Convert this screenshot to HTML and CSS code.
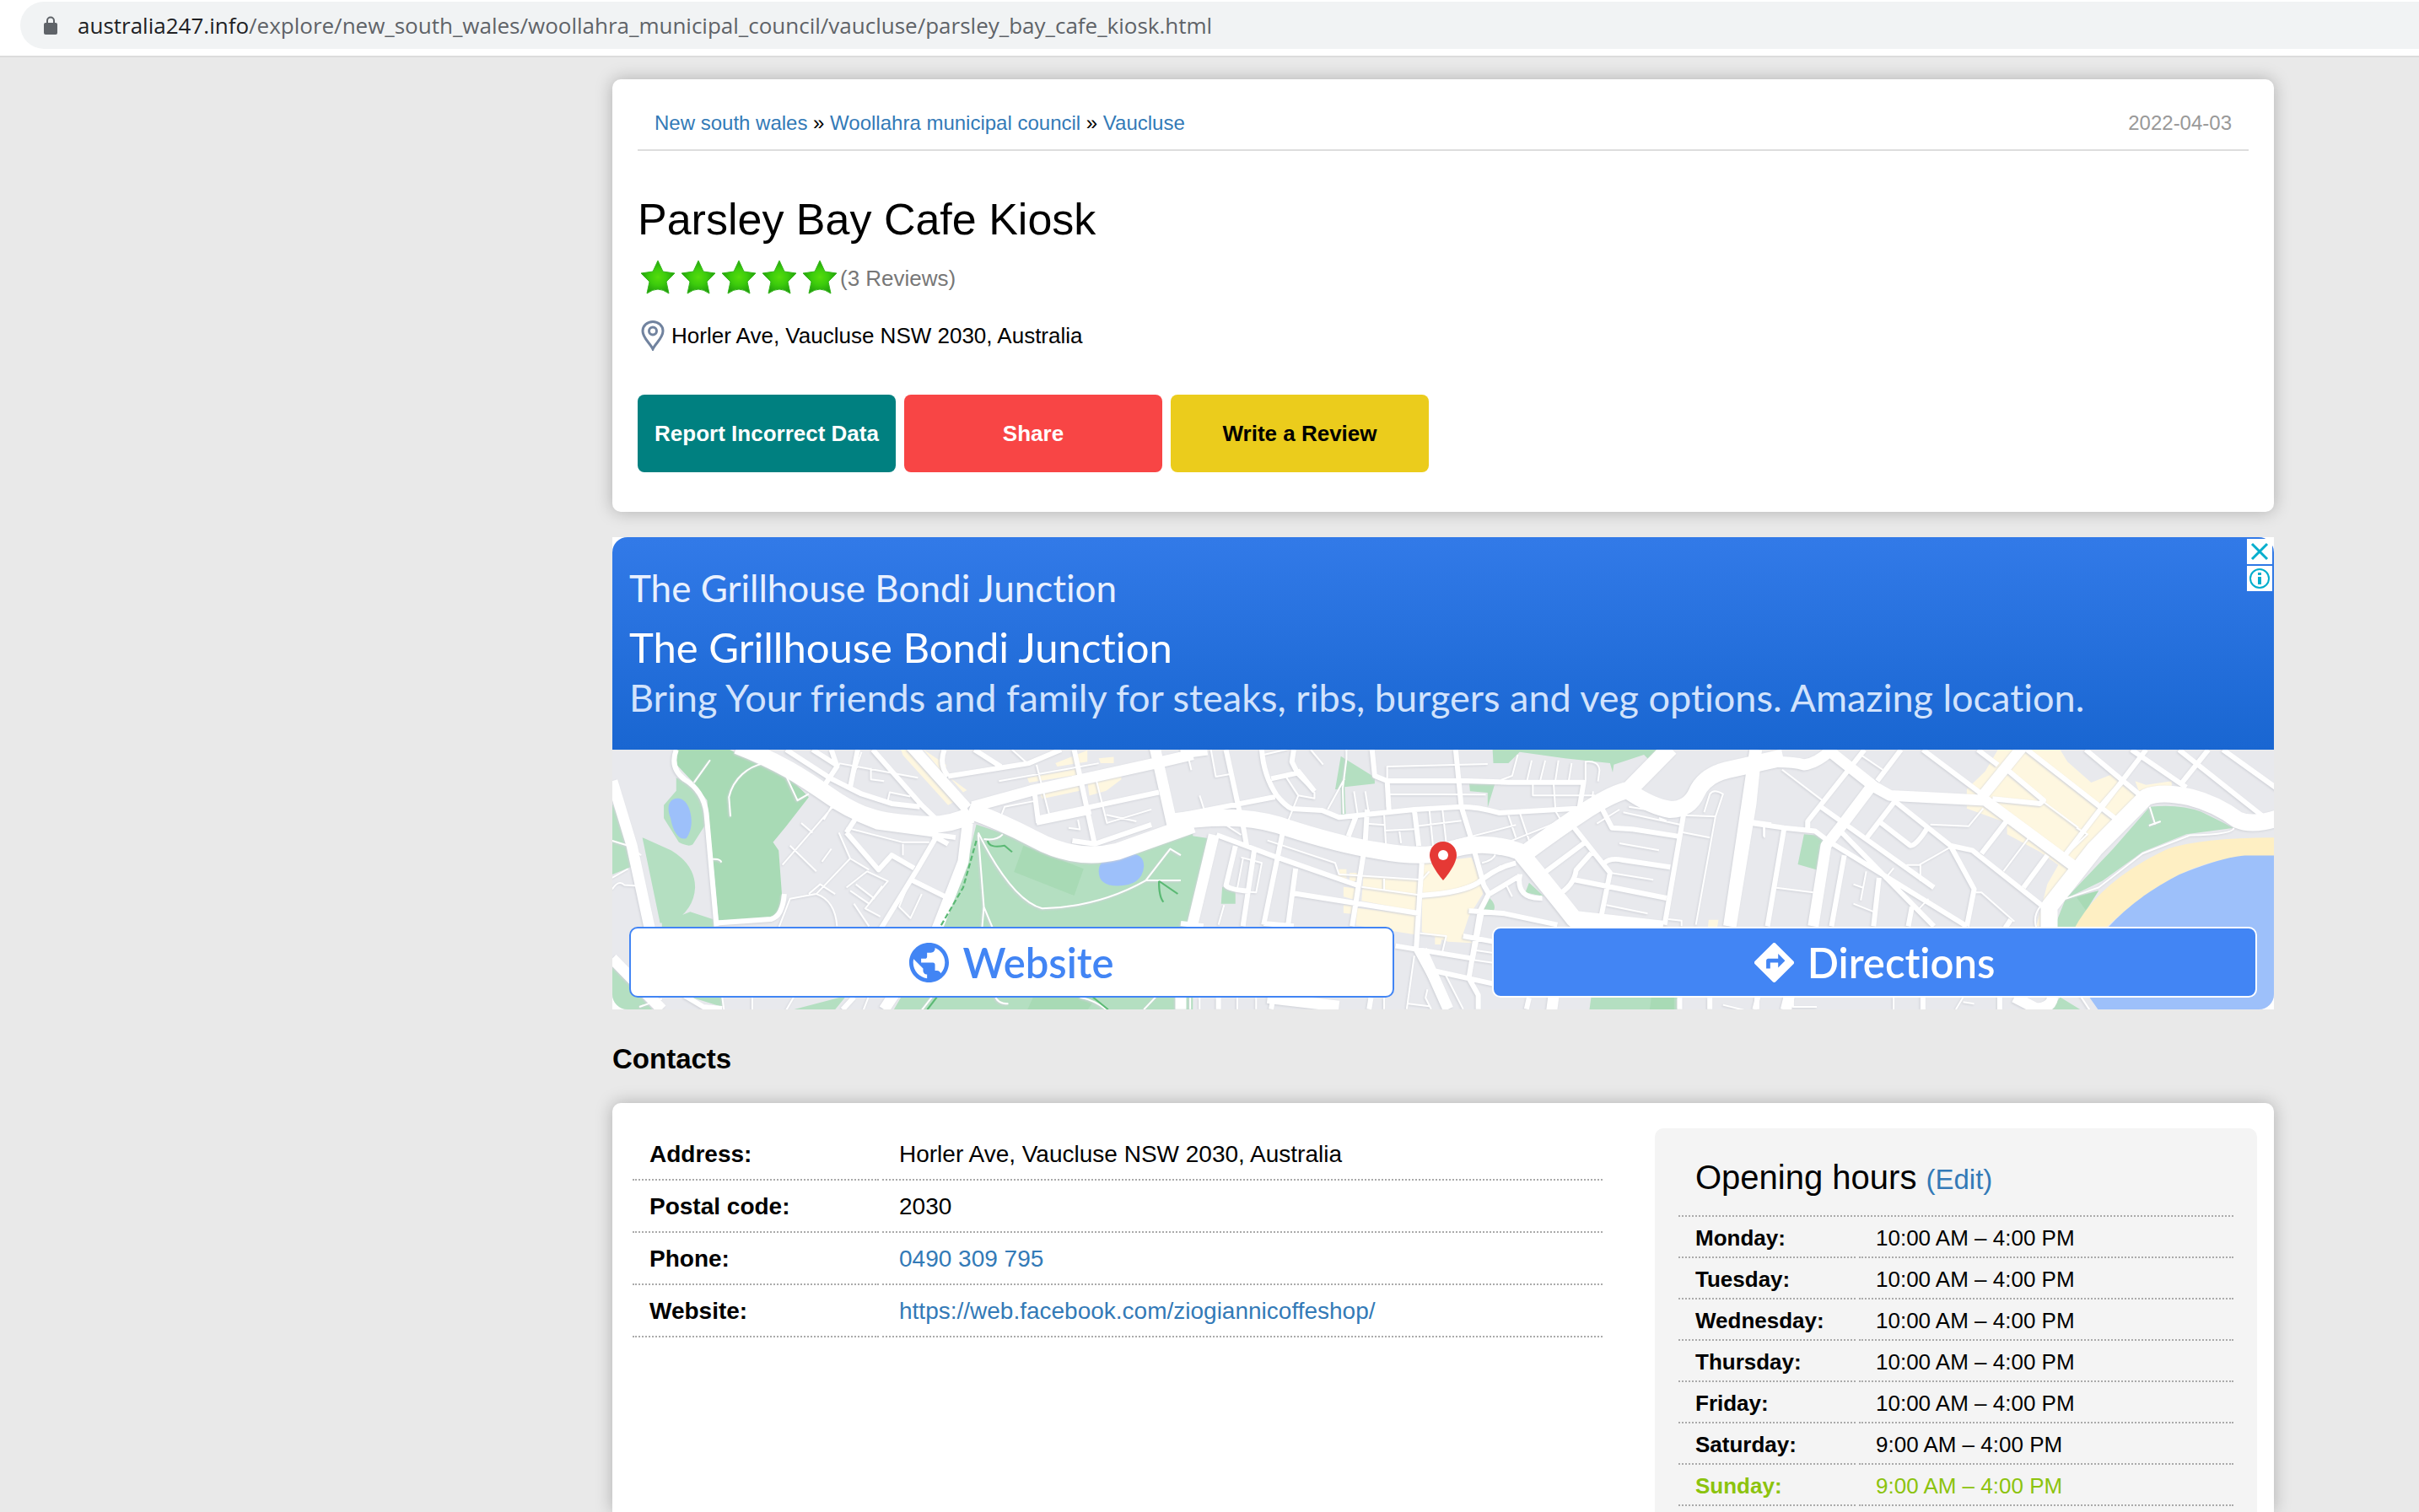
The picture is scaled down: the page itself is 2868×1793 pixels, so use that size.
FILE: index.html
```html
<!DOCTYPE html>
<html lang="en">
<head>
<meta charset="utf-8">
<title>Parsley Bay Cafe Kiosk</title>
<link rel="stylesheet" href="styles.css">
</head>
<body>
<header class="browser-bar">
  <div class="omnibox">
    <svg class="lock" viewBox="0 0 16 22" aria-hidden="true"><path d="M4 9V5.500a4 4 0 0 1 8 0V9" fill="none" stroke="#5f6368" stroke-width="2"/><rect y="8" width="16" height="14" rx="2" fill="#5f6368"/></svg>
    <span class="url"><span class="url-host">australia247.info</span>/explore/new_south_wales/woollahra_municipal_council/vaucluse/parsley_bay_cafe_kiosk.html</span>
  </div>
</header>
<main class="page">
  <section class="card intro">
    <div class="crumb-row">
      <nav class="crumbs"><a href="#">New south wales</a> » <a href="#">Woollahra municipal council</a> » <a href="#">Vaucluse</a></nav>
      <time class="date">2022-04-03</time>
    </div>
    <h1>Parsley Bay Cafe Kiosk</h1>
    <div class="rating">
      <svg class="stars" viewBox="0 0 240 44" role="img" aria-label="5 stars">
        <defs>
          <radialGradient id="starFill"><stop offset="0" stop-color="#55dc0c"/><stop offset=".5" stop-color="#3ccb0c"/><stop offset="1" stop-color="#22a00c"/></radialGradient>
          <path id="star" d="M24 2L30 15L44 17L34 27L37 41Q30 36 24 36Q18 36 11 41L14 27L4 17L18 15Z" fill="url(#starFill)" stroke="#35b51c" stroke-width="1" stroke-linejoin="round"/>
        </defs>
        <use href="#star"/><use href="#star" x="48"/><use href="#star" x="96"/><use href="#star" x="144"/><use href="#star" x="192"/>
      </svg>
      <span class="reviews">(3 Reviews)</span>
    </div>
    <div class="place">
      <svg class="place-pin" viewBox="0 0 28 36" aria-hidden="true"><g fill="none" stroke="#71839f" stroke-width="3"><path d="M14 34C11 27 2 21 2 12.500A12 11 0 0 1 26 12.500C26 21 17 27 14 34Z"/><circle cx="14" cy="12.500" r="4.500"/></g></svg>
      <span>Horler Ave, Vaucluse NSW 2030, Australia</span>
    </div>
    <div class="actions">
      <button class="action report" type="button">Report Incorrect Data</button>
      <button class="action share" type="button">Share</button>
      <button class="action review" type="button">Write a Review</button>
    </div>
  </section>

  <aside class="ad">
    <div class="ad-inner">
      <div class="ad-copy">
        <p class="ad-brand">The Grillhouse Bondi Junction</p>
        <p class="ad-title">The Grillhouse Bondi Junction</p>
        <p class="ad-text">Bring Your friends and family for steaks, ribs, burgers and veg options. Amazing location.</p>
      </div>
      <div class="ad-map">
        <svg class="map" viewBox="0 0 1970 308" preserveAspectRatio="xMidYMid slice" aria-hidden="true">
          <rect width="1970" height="308" fill="#e8e9ed"/>
          <!-- parks, water and shopping streets -->
          <g transform="matrix(.4464 0 0 .3827 -26 -269)">
            <path class="park-deep" d="M230 703H370L440 745L520 780L580 850L520 940L485 990L500 1015L510 1175Q505 1222 480 1224L340 1232L310 860L270 800L225 745Z"/>
            <path class="park" d="M228 790L270 812L305 860L308 930L272 996Q262 1006 235 990L195 915V875L228 830ZM138 975L215 1015Q278 1060 278 1130Q275 1200 215 1240H185ZM58 870L95 970L120 1060L58 1090ZM190 1240L265 1205L330 1230V1255H190ZM58 1370L165 1508H58ZM240 1460L350 1500V1460ZM540 1508L680 1465L650 1508ZM830 1460H1600V1510H805ZM1025 935L1130 975L1270 1045L1400 1040L1600 950V1255H930L990 1100Z"/>
            <path class="park-deep" d="M1150 1000L1310 1072L1285 1155L1125 1082ZM1180 1460H1350L1320 1510H1160Z"/>
            <path class="water" d="M235 854C210 850 200 880 213 915C220 965 240 985 255 977C280 940 268 860 235 854ZM1400 1030Q1470 1010 1470 1065Q1465 1125 1400 1125Q1350 1125 1350 1080Q1350 1040 1400 1030Z"/>
            <path class="shops" d="M825 703H850L965 865L950 875L830 720ZM885 703L945 750L940 780ZM1160 790L1300 760V780L1165 805ZM1190 830L1300 808V830L1200 855ZM1235 745L1320 705V740L1240 755ZM1320 800L1410 785V795L1370 830L1325 845ZM1350 730L1390 725V745H1355ZM955 790L1000 828L990 835Z"/>
          </g>
          <g transform="matrix(.4464 0 0 .3333 674 -29)">
            <path class="park" d="M0 388L72 402L20 720H0ZM425 110L515 185V208L435 220L438 318H426L425 228H410ZM828 87H1285L1245 125L1230 105L1150 140L1147 168L1140 135L1020 118L900 95L870 135H830ZM766 205H835L815 292V240L768 235ZM110 575H145V635H107ZM925 560L965 610L915 595ZM820 615Q840 640 830 662L803 660ZM1090 965H1320V1015H1085Z"/>
            <path class="park-deep" d="M1250 965H1310V1015H1245Z"/>
            <path class="shops" d="M642 492L772 470L797 545L802 600L765 680L750 740L775 775L710 770L640 735ZM485 535L638 550V665L480 625ZM468 650L636 675L622 745L465 712ZM420 512H440V545L415 540ZM448 525H470V555H448ZM432 575L465 580L460 620L432 610ZM432 640H458V672L432 668ZM675 750H695L690 780H675ZM1402 692H1428L1425 718H1400Z"/>
          </g>
          <g transform="matrix(.4337 0 0 .3827 1324 -269)">
            <path class="shops" d="M735 703H905L925 740L990 805L1045 780L1150 850L935 1060L880 1250H840L870 1120L900 1060L850 1020L760 965V930L650 885V825L700 770ZM1110 800L1140 812L1210 800V815L1120 830Z"/>
            <path class="park" d="M1150 880Q1230 870 1290 895L1380 945L1250 965L1130 1020L1020 1110L920 1165L1050 1010ZM205 965L258 970L240 1075L188 1058ZM890 1250L920 1165L1010 1140L945 1260ZM880 1508L905 1470L960 1508Z"/>
            <path class="park-deep" d="M950 1160L1010 1140L975 1200Z"/>
            <path class="sand" d="M1500 975Q1290 975 1200 1010Q1010 1110 940 1265H1020Q1230 1040 1400 1040L1500 1032Z"/>
            <path class="water" d="M1500 1031H1410Q1350 1035 1230 1090Q1110 1160 1035 1255V1465L985 1470L1010 1510H1500Z"/>
          </g>
          <!-- roads -->
          <g class="roads">
            <g transform="matrix(.4464 0 0 .3827 -26 -269)">
              <path class="lane" d="M58 985L100 1000L135 1030M58 1100L100 1072M58 1135Q75 1105 90 1122L125 1125M318 735L275 805M372 910L368 850C380 790 420 755 460 745M520 785L550 860L580 840M325 1042Q345 1040 348 1052M720 710L690 815M660 745L870 790M790 860L795 835L850 848M745 760V795L780 800M1085 800L1350 745M1120 703L1160 745M1185 750L1220 910M1090 910L1100 880L1180 862M1340 780L1372 930L1490 888M1370 905L1450 925M1270 945L1300 950L1295 920M620 920L640 880L700 908M560 930L590 960M510 1060L640 885M530 1000L600 1080M680 945L830 990H900M690 1040L660 960M830 995V1030M600 1150L690 1040L740 1075M640 1010L615 1050M680 1130L735 1080L790 1110L730 1195L770 1220M690 1140L740 1180L775 1125M705 1120L755 1165M850 1105L820 1190L850 1225L880 1150M500 1255L530 1165L600 1150Q650 1170 655 1250M580 1150L610 1120L650 1150M700 1180L740 1250M1030 965L1045 1190L1070 1260M1045 1190L1040 1260M1030 960Q1120 1170 1200 1195Q1350 1190 1475 1108L1540 1010L1568 1030M1475 1108H1568M1045 980Q1080 985 1095 965M130 1500L190 1475M350 1470L355 1510M430 1470V1510M540 1470L520 1510M740 1465L725 1510M910 1465L880 1510M1075 1465Q1080 1490 1110 1490M1300 1470Q1340 1480 1370 1508M1505 1465L1470 1508"/>
              <path class="street" d="M228 703Q210 760 250 795Q300 830 308 900L335 1250M335 1240L480 1228Q510 1220 515 1150M520 703L635 790L720 840L800 870L875 880M640 703L655 755L615 825M590 703L660 755M710 703L690 820M750 703L880 875L920 920M950 785L1165 745L1250 703M940 703Q925 750 950 785M1020 703L1090 755M1285 703L1340 1000M1180 840L1190 930M1190 915L1510 835M1185 930L1330 895M680 960L705 915L760 942L970 975M680 960L765 1075L800 1030L860 1070M925 960L870 1070L770 1260M850 1105L945 1160M910 970L950 995M1280 985L1340 995L1490 935M250 1465L300 1500L350 1505M670 1508L700 1470"/>
              <path class="avenue" d="M58 800L110 1000L158 1260M58 1350L190 1508M850 690L1000 885M1015 880L1170 830L1500 745L1600 718M1498 690L1545 935M1002 930L990 1050L960 1140L920 1260L780 1508"/>
              <path class="highway" d="M390 690C500 740 560 785 640 850S780 930 900 935Q960 935 1010 905M1005 890Q1090 925 1180 980Q1290 1050 1400 1018L1600 935"/>
            </g>
            <g transform="matrix(.4464 0 0 .3333 674 -29)">
              <path class="lane" d="M15 87L28 160M80 87L93 183L128 175M50 250L62 300M345 87L378 140M220 105L285 85M280 185L312 250L285 340M300 165L355 240V260L312 250M440 87V120L430 225L432 315M435 190L390 300M460 235L470 320M490 235L500 320M548 290V147L815 138M550 245L810 247M730 87L745 290M895 105L880 180L850 195M932 125L920 195M968 125L955 195M1003 125L995 195M1038 135L1030 200M1075 200V130Q1110 125 1112 160L1108 200M935 195V250H1100M990 205L995 300M1095 235L1090 300M495 350L540 355M540 320L545 430M540 375L620 370M580 370L585 420M660 300L670 430M695 300L705 420M620 360L745 340M730 410L890 355M900 310L930 430M870 415L1010 340M995 305L1015 350M870 320L890 400M1165 300L1105 350M1175 310L1330 355M1190 290L1335 320L1420 325L1440 245Q1415 225 1405 245L1390 310M1330 380L1405 400M1420 325L1368 710M1165 420L1270 445M1140 525L1255 550M1130 640L1240 670M1270 330L1290 340M1295 690L1330 695V715M1568 360H1550V400M230 410L410 490L420 530L640 550M120 355L160 390M160 470L215 490L200 595L155 590M165 475L150 580M115 640L100 710M480 575L640 605Q780 590 850 500M540 540V590M640 550L660 520M800 490Q830 480 835 460M865 570L880 610M905 530L900 570M635 740L705 750L695 805M780 800L830 810M775 835L830 845M620 820L600 1010M655 940L650 970L665 1010M700 880L750 1010M600 990L660 1000M25 970V1010M50 970V1010M150 970V1010M200 970V1010M540 970V1010M1440 995L1500 1015"/>
              <path class="street" d="M120 87L158 320M215 87Q220 180 255 250Q280 290 295 297L375 303L420 328L490 318L620 300L745 290Q790 290 845 312L1070 295M240 190L310 170L295 130L300 87M310 160L355 235M0 320L250 255M508 87L515 180L548 198L740 197L870 203H1070L1058 300M548 198L553 310M730 87L745 290L775 420M620 300L632 430M465 325L445 395M495 300L490 410M165 355L175 430M95 390L245 465L470 570M145 430L120 570Q130 585 180 590M195 445L165 715M270 385L220 710M305 510L285 710M485 460L455 715M295 597L635 670M640 490L625 800L710 1010M570 785L775 830L800 660M640 605Q750 595 790 560Q840 505 890 490M780 450L805 570L818 600L795 660L765 900L790 960V1010M820 600L895 540M900 530Q890 620 960 615M765 660L860 670L1000 710M1120 300L1145 365L1200 370L1320 395M1335 320L1285 710M1045 365L1140 525L1115 690M950 540L1075 415M1000 605Q1045 570 1050 515L1090 455M1045 550L1290 615M1125 490Q1140 470 1175 480L1300 505M660 870L830 920M750 750L830 770M0 705L60 715M220 705L300 715M100 970V1010M245 970L240 1010M505 970L500 1010M925 970L918 1010M1325 970V1010M1405 970V1010M1530 970V1010M1515 345L1568 355"/>
              <path class="avenue" d="M0 100L70 87M88 390L30 715M640 800L710 1010M1525 87L1455 715M990 965L985 1015M0 965V1010M230 970L420 1000"/>
              <path class="highway" d="M-20 343Q150 310 260 355Q420 425 520 445Q640 475 700 450Q800 400 900 450Q980 580 1045 690L1280 725M900 470Q1000 370 1080 300Q1150 240 1190 230L1300 80M1190 235Q1250 290 1300 300Q1350 300 1370 240Q1390 180 1450 160L1600 115"/>
            </g>
            <g transform="matrix(.4337 0 0 .3827 1324 -269)">
              <path class="lane" d="M355 715L420 765M145 765L255 860M95 940V972M125 1130L230 1145M340 1120L365 1130M375 1080L360 1170M340 1180L395 1205M425 1105L450 1070M550 935L655 940L695 885M485 1060H520L605 1005M523 1060V1110M520 1195L545 1165M675 1145H690L780 1235M820 975L750 1080M860 865L955 945M965 955L920 1030L980 965L950 945M1150 880L1165 935M1148 938L1180 925M1380 945Q1380 965 1260 968L1130 1025L1010 1130L920 1165M850 1190Q830 1220 840 1255M175 1470V1500H240M450 1470V1508M640 1470L620 1508M640 1485L670 1490M960 1465L985 1508"/>
              <path class="street" d="M470 703L405 800M370 703L215 925V955M60 930L150 945L235 955L270 985L650 1250M150 950L105 1250M245 875L560 1130M300 950L560 1250M315 1030L280 1250M455 860L370 985M450 860L605 1000L665 1015L860 1190M410 925L495 1000Q510 1005 545 940M605 1000L670 1135L650 1250M765 915L690 1025M870 1030L805 1130M410 1100L395 1250M500 1190L490 1250M770 1230L755 1255M530 703L685 835M680 703L735 750M755 760L860 860L850 870L720 855M815 703L1060 920M1140 703L915 1035M975 703L1125 845M1080 795L1015 880M1100 703L1250 820M1230 703L1460 910M1310 703L1235 810M1350 703L1500 825M80 1465L70 1508M530 1465V1508M740 1465V1508"/>
              <path class="avenue" d="M75 703L60 870L5 1250M0 770L60 745Q160 735 205 750Q240 745 280 703M270 703L400 820M400 800L300 950L265 1000L230 1250M400 820L440 845L700 860M805 690L690 850M700 860L950 1070M165 1465L155 1510M780 1470L840 1505Q880 1505 885 1470"/>
              <path class="highway" d="M875 1260V1190L1000 1010L1140 850Q1180 830 1260 850Q1330 870 1390 920Q1430 940 1500 915"/>
            </g>
          </g>
          <g transform="matrix(.4464 0 0 .3827 -26 -269)"><path class="trail" stroke-dasharray="16 8" d="M1025 985L990 1130L930 1250"/><path class="trail" d="M1055 985Q1060 1010 1100 1000L1120 1020M1510 1110Q1510 1160 1522 1175M1510 1110L1560 1150M920 1470L895 1508M1335 1470L1375 1508"/></g>
        </svg>
        <svg class="map-pin" viewBox="0 0 32 46" aria-hidden="true"><path d="M16 0C7 0 0 7 0 16C0 28 16 46 16 46S32 28 32 16C32 7 25 0 16 0Z" fill="#e53935"/><circle cx="16" cy="16" r="6" fill="#fff"/></svg>
        <div class="ad-links">
          <a class="ad-link website" href="#"><svg viewBox="2 2 20 20" aria-hidden="true"><path fill="#4285f4" d="M12 2C6.480 2 2 6.480 2 12s4.480 10 10 10 10-4.480 10-10S17.520 2 12 2zm-1 17.930c-3.950-.490-7-3.850-7-7.930 0-.620.080-1.210.210-1.790L9 15v1c0 1.100.900 2 2 2v1.930zm6.900-2.540c-.260-.810-1-1.390-1.900-1.390h-1v-3c0-.550-.450-1-1-1H8v-2h2c.550 0 1-.450 1-1V7h2c1.100 0 2-.900 2-2v-.410c2.930 1.190 5 4.060 5 7.410 0 2.080-.800 3.970-2.100 5.390z"/></svg>Website</a>
          <a class="ad-link directions" href="#"><svg viewBox="2 2 20 20" aria-hidden="true"><path fill="#fff" d="M21.710 11.290l-9-9a.996.996 0 0 0-1.410 0l-9 9a.996.996 0 0 0 0 1.410l9 9c.390.390 1.020.390 1.410 0l9-9a.996.996 0 0 0 0-1.410zM14 14.500V12h-4v3H8v-4c0-.550.450-1 1-1h5V7.500l3.500 3.500-3.500 3.500z"/></svg>Directions</a>
        </div>
      </div>
    </div>
    <div class="ad-controls">
      <button type="button" aria-label="Close ad"><svg viewBox="0 0 30 30"><path d="M6 6L24 24M24 6L6 24" stroke="#00aecd" stroke-width="3"/></svg></button>
      <button type="button" aria-label="Ad information"><svg viewBox="0 0 30 30"><circle cx="15" cy="15" r="11" fill="none" stroke="#00aecd" stroke-width="2"/><path d="M15 13V22M15 8V11" stroke="#00aecd" stroke-width="4"/></svg></button>
    </div>
  </aside>

  <h2>Contacts</h2>
  <section class="card contacts">
    <table class="details">
      <tr><th scope="row">Address:</th><td>Horler Ave, Vaucluse NSW 2030, Australia</td></tr>
      <tr><th scope="row">Postal code:</th><td>2030</td></tr>
      <tr><th scope="row">Phone:</th><td><a href="#">0490 309 795</a></td></tr>
      <tr><th scope="row">Website:</th><td><a href="#">https://web.facebook.com/ziogiannicoffeshop/</a></td></tr>
    </table>
    <div class="hours-box">
      <table class="hours">
        <colgroup><col class="day-col"><col></colgroup>
        <thead><tr><th colspan="2">Opening hours <a href="#">(Edit)</a></th></tr></thead>
        <tbody>
          <tr><th scope="row">Monday:</th><td>10:00 AM – 4:00 PM</td></tr>
          <tr><th scope="row">Tuesday:</th><td>10:00 AM – 4:00 PM</td></tr>
          <tr><th scope="row">Wednesday:</th><td>10:00 AM – 4:00 PM</td></tr>
          <tr><th scope="row">Thursday:</th><td>10:00 AM – 4:00 PM</td></tr>
          <tr><th scope="row">Friday:</th><td>10:00 AM – 4:00 PM</td></tr>
          <tr><th scope="row">Saturday:</th><td>9:00 AM – 4:00 PM</td></tr>
          <tr class="today"><th scope="row">Sunday:</th><td>9:00 AM – 4:00 PM</td></tr>
        </tbody>
      </table>
    </div>
  </section>
</main>
</body>
</html>
```
FILE: styles.css
```css
* { box-sizing: border-box; }

body {
  margin: 0;
  height: 100vh;
  overflow: hidden;
  display: flex;
  flex-direction: column;
  background: #e9e9e9;
  color: #000;
  font: 26px/30px "Liberation Sans", Arial, sans-serif;
}

a { color: #337ab7; text-decoration: none; }
h1, h2, p { margin: 0; }
svg { display: block; }

/* Address bar */
.browser-bar {
  padding: 2px 0 8px 24px;
  background: #fff;
  border-bottom: 2px solid #dcdcdc;
}
.omnibox {
  display: flex;
  align-items: center;
  gap: 24px;
  height: 56px;
  padding-left: 28px;
  border-radius: 28px 0 0 28px;
  background: #f1f3f4;
}
.lock { width: 16px; height: 22px; }
.url {
  color: #5f6368;
  font: 26px/36px "Open Sans", "Noto Sans", sans-serif;
  white-space: nowrap;
}
.url-host { color: #202124; }

/* Page */
.page {
  flex: 1;
  min-height: 0;
  display: flex;
  flex-direction: column;
  padding: 26px 172px 0 726px;
}
.card {
  background: #fff;
  border-radius: 10px;
  box-shadow: 0 0 20px rgba(0, 0, 0, .25);
}

.intro { padding: 30px 30px 47px; }
.crumb-row {
  display: flex;
  justify-content: space-between;
  padding: 7px 20px 16px;
  border-bottom: 2px solid #ddd;
  font-size: 24px;
}
.date { color: #999; }
h1 {
  margin-top: 50px;
  font-size: 52px;
  font-weight: 400;
  line-height: 62px;
}
.rating {
  display: flex;
  align-items: center;
  margin-top: 16px;
}
.stars { width: 240px; height: 44px; }
.reviews { padding-top: 2px; color: #777; }
.place {
  display: flex;
  align-items: center;
  gap: 8px;
  margin-top: 29px;
  padding-left: 4px;
}
.place-pin { width: 28px; height: 36px; }
.actions {
  display: flex;
  gap: 10px;
  margin-top: 52px;
}
.action {
  width: 306px;
  height: 92px;
  padding: 0;
  border: 0;
  border-radius: 8px;
  color: #fff;
  font: bold 26px/30px "Liberation Sans", Arial, sans-serif;
}
.report { background: #008080; }
.share { background: #f84545; }
.review { background: #ebcc1c; color: #000; }

/* Advertisement */
.ad {
  position: relative;
  margin-top: 30px;
  background: #fff;
  font-variant-ligatures: none;
}
.ad-inner {
  overflow: hidden;
  border-radius: 18px;
}
.ad-copy {
  height: 252px;
  padding: 32px 20px 0;
  background: linear-gradient(#327ae8, #1966d1);
  color: #fff;
  font-family: Lato, sans-serif;
  white-space: nowrap;
}
.ad-brand { color: #e8f0fe; font-size: 44px; line-height: 56px; }
.ad-title { margin-top: 12px; font-size: 49px; line-height: 60px; }
.ad-text { color: #d2e3fc; font-size: 45px; line-height: 60px; }
.ad-map {
  position: relative;
  display: flex;
  align-items: flex-end;
  height: 308px;
}
.map { position: absolute; inset: 0; width: 100%; height: 100%; }
.map-pin {
  position: absolute;
  top: 109px;
  left: calc(50% - 16px);
  width: 32px;
  height: 46px;
}
.park { fill: #b4dfc1; }
.park-deep { fill: #a8dab5; }
.water { fill: #9dc0fa; }
.shops { fill: #fef7e0; }
.sand { fill: #feefc3; }
.roads { filter: drop-shadow(-1px 1px 1px #d0d2d8); }
.roads path {
  fill: none;
  stroke: #fff;
  stroke-linejoin: round;
  vector-effect: non-scaling-stroke;
}
.roads .lane { stroke-width: 2px; }
.roads .street { stroke-width: 6px; }
.roads .avenue { stroke-width: 13px; }
.roads .highway { stroke-width: 20px; }
.trail { fill: none; stroke: #5bb974; stroke-width: 5px; }

.ad-links {
  position: relative;
  flex: 1;
  display: grid;
  grid-template-columns: 1fr 1fr;
  gap: 116px;
  padding: 0 20px 14px;
}
.ad-link {
  display: flex;
  align-items: center;
  justify-content: center;
  gap: 16px;
  height: 84px;
  border: 2px solid #4285f4;
  border-radius: 10px;
  background: #fff;
  color: #4285f4;
  font: 600 49px/60px Lato, sans-serif;
  font-variant-ligatures: none;
}
.ad-link svg { width: 47px; height: 47px; }
.directions { border-color: #fff; background: #4285f4; color: #fff; }
.ad-controls {
  position: absolute;
  top: 2px;
  right: 2px;
  display: grid;
  gap: 2px;
}
.ad-controls button {
  width: 30px;
  height: 30px;
  padding: 0;
  border: 0;
  background: #fff;
}

/* Contacts */
h2 {
  margin: 39px 0 33px;
  font-size: 33px;
  line-height: 39px;
}
.contacts {
  flex: 1;
  min-height: 0;
  display: flex;
  align-items: stretch;
  justify-content: space-between;
  padding: 30px 20px 0 20px;
  border-radius: 10px 10px 0 0;
}
table { border-spacing: 4px 0; table-layout: fixed; }
th, td { padding: 2px 20px 0; border-bottom: 2px dotted #aaa; text-align: left; }
.details {
  align-self: flex-start;
  flex: 1;
  max-width: 1158px;
  font-size: 28px;
}
.details th { width: 292px; }
.details th, .details td { height: 62px; }
.hours-box {
  width: 714px;
  padding: 0 24px;
  border-radius: 10px 10px 0 0;
  background: #f4f4f4;
}
.hours { width: 100%; }
.day-col { width: 210px; }
.hours thead th {
  height: 105px;
  padding-top: 16px;
  font-size: 40px;
  font-weight: 400;
}
.hours thead a { font-size: 33px; }
.hours tbody th, .hours tbody td { height: 49px; }
.today { color: #8cc30d; }
```
